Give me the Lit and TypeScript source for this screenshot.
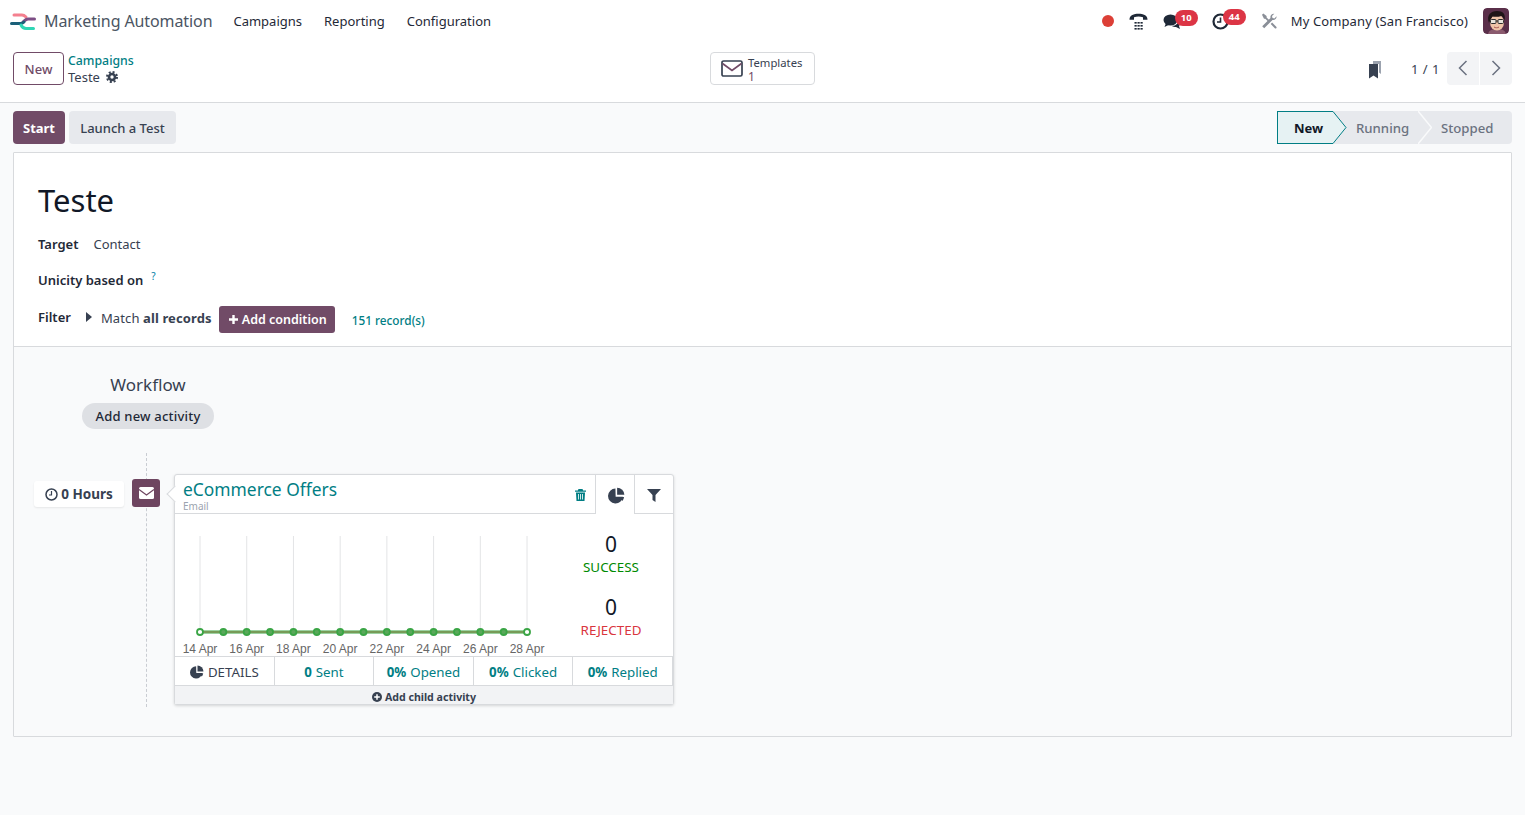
import { LitElement, html, css, svg } from "lit";
import { customElement } from "lit/decorators.js";

const TEAL = "#017e84";
const PLUM = "#714b67";
const DARK = "#374151";

const pie = (size: number, color: string) => html`
  <svg width=${size} height=${size} viewBox="0 0 16 16" fill=${color}>
    <path d="M7 1.500a7 7 0 1 0 7 7.600H7.200z" />
    <path d="M8.600 .6a7 7 0 0 1 6.800 6.800H8.600z" />
    <path d="M9.400 9.300h5.700a7 7 0 0 1-1.600 3.900z" />
  </svg>
`;

const envelopeOutline = html`
  <svg width="22" height="17" viewBox="0 0 22 17" fill="none" stroke=${PLUM} stroke-width="1.700">
    <rect x="1" y="1" width="20" height="15" rx="1.600" stroke=${DARK} />
    <path d="M1.500 3.500 11 10.500l9.500-7" />
  </svg>
`;

@customElement("app-root")
export class AppRoot extends LitElement {
  static styles = css`
    :host {
      display: block;
      font-family: "Noto Sans", "Open Sans", sans-serif;
      font-size: 13px;
      color: #374151;
      background: #f9fafb;
      min-height: 815px;
    }

    * {
      box-sizing: border-box;
    }

    .navbar {
      display: flex;
      align-items: center;
      height: 42px;
      padding: 0 16px 0 10px;
      background: #fff;
    }

    .app-name {
      margin-left: 8px;
      margin-right: 21px;
      font-size: 16px;
      letter-spacing: -0.1px;
      color: #4b5563;
    }

    .menu {
      display: flex;
      gap: 22px;
      color: #1f2937;
    }

    .systray {
      display: flex;
      align-items: center;
      margin-left: auto;
      color: #1f2937;
    }

    .tray-item {
      position: relative;
      display: flex;
      justify-content: center;
      align-items: center;
    }

    .badge {
      position: absolute;
      top: -4px;
      height: 16px;
      padding: 0 6px;
      border-radius: 8px;
      background: #dc3545;
      color: #fff;
      font-size: 9.500px;
      font-weight: 700;
      line-height: 16px;
    }

    .company {
      margin-left: 12px;
      margin-right: 15px;
      letter-spacing: 0.12px;
    }

    .avatar {
      display: block;
      border-radius: 4px;
    }

    .control {
      display: grid;
      grid-template-columns: 1fr auto 1fr;
      align-items: center;
      height: 61px;
      padding: 0 13px 8px;
      background: #fff;
      border-bottom: 1px solid #d8dadd;
    }

    .control-left {
      display: flex;
      align-items: center;
      gap: 4px;
    }

    .btn-new {
      height: 33px;
      width: 51px;
      padding: 1px 0 0;
      border: 1px solid #714b67;
      border-radius: 4px;
      background: #fff;
      color: #714b67;
      font: inherit;
      font-weight: 500;
    }

    .crumbs {
      display: flex;
      flex-direction: column;
      line-height: 16px;
      padding-top: 1px;
    }

    .crumbs a {
      color: #017e84;
      font-size: 12.300px;
      font-weight: 500;
    }

    .crumb-current {
      display: flex;
      align-items: center;
      gap: 6px;
    }

    .stat-btn {
      display: flex;
      align-items: center;
      gap: 5px;
      width: 105px;
      height: 33px;
      padding: 0 10px 0 10px;
      border: 1px solid #d8dadd;
      border-radius: 4px;
      background: #fff;
    }

    .stat-text {
      display: flex;
      flex-direction: column;
      padding-top: 4px;
      font-size: 11.300px;
      line-height: 14px;
    }

    .stat-count {
      color: #714b67;
      font-size: 12px;
    }

    .control-right {
      display: flex;
      align-items: center;
      justify-content: flex-end;
    }

    .bookmark {
      margin-top: 4px;
    }

    .pager-text {
      margin-left: 29px;
      margin-right: 6px;
      padding-top: 1px;
      letter-spacing: 0.5px;
    }

    .pager-btn {
      display: flex;
      align-items: center;
      justify-content: center;
      width: 32px;
      height: 33px;
      background: #f3f4f6;
      margin-left: 1px;
    }

    .pager-btn.first {
      border-radius: 4px 0 0 4px;
    }

    .pager-btn.last {
      border-radius: 0 4px 4px 0;
    }

    .actions {
      display: flex;
      justify-content: space-between;
      padding: 8px 13px;
    }

    .action-btns {
      display: flex;
      gap: 4px;
    }

    .btn {
      height: 33px;
      padding: 0;
      border: none;
      border-radius: 4px;
      font: inherit;
      font-weight: 500;
    }

    .btn-primary {
      width: 52px;
      background: #714b67;
      color: #fff;
      font-weight: 700;
    }

    .btn-secondary {
      width: 107px;
      background: #e7e9ed;
      color: #374151;
    }

    .statusbar {
      display: flex;
      height: 33px;
      background: #e7e9ed;
      border-radius: 0 4px 4px 0;
      font-size: 13.200px;
      font-weight: 500;
      color: #6b7280;
    }

    .step {
      position: relative;
      display: flex;
      align-items: center;
    }

    .step svg {
      position: absolute;
      top: 0;
      left: 100%;
      z-index: 1;
    }

    .step-new {
      width: 56px;
      padding-left: 16px;
      background: #e6f2f3;
      border: 1px solid #017e84;
      border-right: none;
      color: #111827;
      font-size: 13px;
      font-weight: 700;
    }

    .step-new svg {
      top: -1px;
    }

    .step-running {
      width: 85px;
      padding-left: 23px;
    }

    .step-stopped {
      width: 94px;
      padding-left: 23px;
    }

    .sheet {
      margin: 0 13px;
      border: 1px solid #d8dadd;
      border-radius: 1px;
    }

    .form {
      height: 194px;
      padding: 24px 24px 0;
      background: #fff;
      border-bottom: 1px solid #d8dadd;
    }

    h1 {
      margin: 0;
      font-size: 31px;
      font-weight: 400;
      line-height: 47px;
      color: #111827;
    }

    .field {
      display: flex;
      align-items: center;
    }

    .label {
      font-weight: 600;
      color: #1f2937;
    }

    .field-target {
      margin-top: 8px;
      height: 24px;
      gap: 15px;
    }

    .field-unicity {
      margin-top: 12px;
      height: 24px;
    }

    .help {
      margin-left: 8px;
      margin-bottom: 8px;
      font-size: 10px;
      color: #0180a5;
    }

    .field-filter {
      margin-top: 10px;
      height: 30px;
    }

    .caret {
      margin-left: 15px;
      margin-right: 9px;
    }

    .match {
      padding-top: 1px;
      letter-spacing: 0.12px;
    }

    .add-cond {
      position: relative;
      top: 2px;
      display: flex;
      align-items: center;
      gap: 3px;
      width: 116px;
      height: 27px;
      margin-left: 7px;
      padding: 1px 0 0 9px;
      border-radius: 3px;
      background: #714b67;
      color: #fff;
      font-size: 12.500px;
      font-weight: 600;
    }

    .records {
      position: relative;
      top: 3px;
      margin-left: 17px;
      color: #017e84;
      font-size: 11.800px;
      font-weight: 500;
    }

    .workflow {
      position: relative;
      height: 389px;
      padding-top: 24px;
    }

    .workflow::before {
      content: "";
      position: absolute;
      left: 132px;
      top: 106px;
      height: 254px;
      border-left: 1px dashed #c9ccd2;
    }

    .wf-head {
      display: flex;
      flex-direction: column;
      align-items: center;
      width: 132px;
      margin-left: 68px;
    }

    .wf-title {
      font-size: 17px;
      line-height: 28px;
      color: #374151;
    }

    .wf-add {
      width: 132px;
      height: 26px;
      margin-top: 4px;
      border: none;
      border-radius: 13px;
      background: #dee0e4;
      color: #1f2937;
      font: inherit;
      font-weight: 500;
      letter-spacing: 0.2px;
    }

    .activity-row {
      display: flex;
      align-items: flex-start;
      margin-top: 45px;
      margin-left: 20px;
    }

    .timing {
      display: flex;
      align-items: center;
      justify-content: center;
      gap: 3px;
      width: 90px;
      height: 26px;
      margin-top: 7px;
      background: #fff;
      border-radius: 3px;
      box-shadow: 0 1px 2px rgba(0, 0, 0, 0.08);
      font-size: 13.500px;
      font-weight: 700;
    }

    .type-icon {
      position: relative;
      display: flex;
      align-items: center;
      justify-content: center;
      width: 28px;
      height: 28px;
      margin-top: 5px;
      margin-left: 8px;
      border-radius: 3px;
      background: #6e4560;
    }

    .card {
      position: relative;
      width: 500px;
      margin-left: 14px;
      background: #fff;
      border: 1px solid #d8dadd;
      border-radius: 3px;
      box-shadow: 0 1px 3px rgba(0, 0, 0, 0.15);
    }

    .card::before {
      content: "";
      position: absolute;
      left: -6px;
      top: 13px;
      width: 11px;
      height: 11px;
      background: #fff;
      border-left: 1px solid #d8dadd;
      border-bottom: 1px solid #d8dadd;
      transform: rotate(45deg);
    }

    .card-head {
      display: flex;
      height: 39px;
    }

    .card-title-wrap {
      display: flex;
      flex: 1;
      align-items: center;
      justify-content: space-between;
      padding: 2px 9px 0 8px;
      border-bottom: 1px solid #d8dadd;
    }

    .card-title {
      color: #017e84;
      font-size: 17.400px;
      line-height: 20px;
    }

    .card-sub {
      margin-top: 2px;
      margin-bottom: -1px;
      color: #9ca3af;
      font-size: 10px;
      line-height: 11px;
    }

    .head-btn {
      display: flex;
      align-items: center;
      justify-content: center;
      width: 39px;
      padding-top: 2px;
      border-left: 1px solid #d8dadd;
    }

    .head-btn.filter {
      border-bottom: 1px solid #d8dadd;
    }

    .head-btn.chart-tab {
      padding-left: 2px;
    }

    .card-body {
      display: grid;
      grid-template-columns: 372px 1fr;
      height: 142px;
    }

    .chart {
      display: block;
    }

    .outcomes {
      display: flex;
      flex-direction: column;
      align-items: center;
      padding-top: 15px;
      padding-left: 2px;
    }

    .outcome-num {
      padding-top: 1px;
      font-size: 21px;
      line-height: 28px;
      color: #111827;
    }

    .outcome-label {
      font-size: 13.400px;
      line-height: 18px;
      margin-bottom: 16px;
    }

    .ok {
      color: #008a00;
    }

    .ko {
      color: #d9363e;
    }

    .counters {
      display: grid;
      grid-template-columns: repeat(5, 1fr);
      height: 30px;
      border-top: 1px solid #d8dadd;
      border-bottom: 1px solid #d8dadd;
      font-size: 13.300px;
    }

    .counter {
      display: flex;
      align-items: center;
      justify-content: center;
      gap: 4px;
      padding-top: 1px;
      border-right: 1px solid #d8dadd;
      color: #017e84;
    }

    .counter b {
      font-weight: 700;
    }

    .counter.details {
      color: #374151;
      gap: 4px;
    }

    .add-child {
      display: flex;
      align-items: center;
      justify-content: center;
      gap: 3px;
      height: 18px;
      padding-top: 3px;
      background: #f2f3f5;
      font-size: 10.600px;
      font-weight: 700;
    }
  `;

  private renderLogo() {
    return html`
      <svg width="26" height="17" viewBox="0 0 26 17" fill="none" stroke-width="3" stroke-linecap="round">
        <path d="M4 2h8c2 0 3 1 4 2" stroke="#f4808f" />
        <path d="M13 9c2-2 3-3 5-3h6.500" stroke="#7d4e85" />
        <path d="M1.500 10.500h9c1.500 0 2.500-.5 3.500-1.500" stroke="#1b6079" />
        <path d="M11 12c1 2 2 3.500 5 3.500h7.500" stroke="#2fd6b5" />
      </svg>
    `;
  }

  private renderAvatar() {
    return html`
      <svg class="avatar" width="26" height="26" viewBox="0 0 26 26">
        <rect width="26" height="26" rx="4" fill="#5a2f4a" />
        <path d="M5 26c1-4 4-5 9-5s8 1 9 5z" fill="#8a5a6e" />
        <ellipse cx="14" cy="14.500" rx="7" ry="8" fill="#efc4a8" />
        <path d="M6 15C3 7 8 3 14 3s9 3 7.500 9.500c-1-2.500-2-4-3-4.500-3 1-7 1-9 .5-1 1.500-2.500 3.500-3.500 6.500z" fill="#1f1517" />
        <g fill="#e8e4dc" stroke="#2b2b2b" stroke-width="1">
          <rect x="7.500" y="11.500" width="5.500" height="4" rx="1" />
          <rect x="15" y="11.500" width="5.500" height="4" rx="1" />
        </g>
        <path d="M13 13h2" stroke="#2b2b2b" />
        <path d="M11 19c1.500 1 3.500 1 5 0" stroke="#a8574f" fill="none" />
      </svg>
    `;
  }

  private renderTray() {
    return html`
      <div class="systray">
        <div class="tray-item" style="width:12px">
          <svg width="12" height="12"><circle cx="6" cy="6" r="6" fill="#dc3f36" /></svg>
        </div>
        <div class="tray-item" style="width:20px;margin-left:15px">
          <svg width="19" height="17" viewBox="0 0 19 17" fill="#1f2937">
            <path d="M.5 6.800C.5 2 5 .8 9.500 .8s9 1.200 9 6H14V4.200c-3-.8-6-.8-9 0v2.600z" />
            <g>
              ${[5.5, 8.5, 11.5].map((x) =>
                [9, 12, 15].map((y) => svg`<rect x=${x} y=${y} width="2.200" height="1.600" />`)
              )}
            </g>
          </svg>
        </div>
        <div class="tray-item" style="width:20px;margin-left:13px">
          <svg width="18" height="15" viewBox="0 0 18 15" fill="#1f2937">
            <ellipse cx="7.500" cy="6" rx="7" ry="5.500" />
            <path d="M3 9 1.500 13l5-2.500z" />
            <path d="M15 5c2 1 3 2.500 2.500 4.500-.4 1.300-1 2-1.500 2.500l1 3-4-2c-1.500 0-3-.2-4-1 4 0 7-3 6-7z" />
          </svg>
          <span class="badge" style="left:13px">10</span>
        </div>
        <div class="tray-item" style="width:20px;margin-left:29px">
          <svg width="17" height="17" viewBox="0 0 17 17" fill="none" stroke="#1f2937">
            <circle cx="8.500" cy="8.500" r="7" stroke-width="2.200" />
            <path d="M8.500 4.500v4.500H5" stroke-width="1.600" />
          </svg>
          <span class="badge" style="left:12px">44</span>
        </div>
        <div class="tray-item" style="width:20px;margin-left:28px">
          <svg width="16" height="16" viewBox="0 0 16 16" fill="#8a8f98">
            <path d="M1.200 13.200 9.500 4.900c-.5-2 1-4.300 3.800-4.100L11 3.100l.5 1.900 1.900.5 2.200-2.300c.2 2.800-2.100 4.300-4.100 3.800l-8.300 8.300z" />
            <path d="M1 1.800 2.300.6 5.600 3v1.400l3.300 3.300-1.300 1.300-3.300-3.300H3z" />
            <path d="M9.700 10.900 11.100 9.500l4.200 4.200c.5.500.5 1 0 1.500s-1 .5-1.500 0z" />
          </svg>
        </div>
        <span class="company">My Company (San Francisco)</span>
        ${this.renderAvatar()}
      </div>
    `;
  }

  private renderChart() {
    const xs = Array.from({ length: 15 }, (_, i) => 25 + i * 23.36);
    return html`
      <svg class="chart" width="372" height="142" viewBox="0 0 372 142">
        ${xs
          .filter((_, i) => i % 2 === 0)
          .map(
            (x) => svg`
              <line x1=${x} x2=${x} y1="22" y2="119" stroke="#e3e4e6" />
              <text x=${x} y="139" text-anchor="middle" font-family="Liberation Sans" font-size="12" fill="#666">
                ${14 + Math.round((x - 25) / 23.36)} Apr
              </text>
            `
          )}
        <line x1="25" x2="352" y1="118" y2="118" stroke="#3aa545" stroke-width="3" />
        <line x1="25" x2="352" y1="118" y2="118" stroke="#b3926a" stroke-width="1" />
        ${xs.map(
          (x, i) => svg`
            <circle cx=${x} cy="118" r="3" fill=${i === 0 || i === 14 ? "#fff" : "#5aa85a"} stroke="#3aa545" stroke-width="1.800" />
          `
        )}
      </svg>
    `;
  }

  private renderCard() {
    return html`
      <div class="card">
        <div class="card-head">
          <div class="card-title-wrap">
            <div>
              <div class="card-title">eCommerce Offers</div>
              <div class="card-sub">Email</div>
            </div>
            <svg width="11" height="12" viewBox="0 0 11 12" fill=${TEAL}>
              <path d="M3.500 0h4l.7 1.500H11v1.300H0V1.500h2.800z" />
              <path d="M1 3.500h9l-.5 8.500h-8z" />
              <path d="M3.500 5v5.500M5.500 5v5.500M7.500 5v5.500" stroke="#cfe8e8" />
            </svg>
          </div>
          <div class="head-btn chart-tab">${pie(17, DARK)}</div>
          <div class="head-btn filter">
            <svg width="14" height="13" viewBox="0 0 14 13" fill=${DARK}>
              <path d="M0 0h14L8.500 6v7l-3-2V6z" />
            </svg>
          </div>
        </div>
        <div class="card-body">
          ${this.renderChart()}
          <div class="outcomes">
            <div class="outcome-num">0</div>
            <div class="outcome-label ok">SUCCESS</div>
            <div class="outcome-num">0</div>
            <div class="outcome-label ko">REJECTED</div>
          </div>
        </div>
        <div class="counters">
          <div class="counter details">${pie(14, DARK)} DETAILS</div>
          <div class="counter"><b>0</b> Sent</div>
          <div class="counter"><b>0%</b> Opened</div>
          <div class="counter"><b>0%</b> Clicked</div>
          <div class="counter"><b>0%</b> Replied</div>
        </div>
        <div class="add-child">
          <svg width="10" height="10" viewBox="0 0 10 10">
            <circle cx="5" cy="5" r="5" fill=${DARK} />
            <path d="M5 2.200v5.600M2.200 5h5.600" stroke="#fff" stroke-width="1.500" />
          </svg>
          Add child activity
        </div>
      </div>
    `;
  }

  render() {
    return html`
      <nav class="navbar">
        ${this.renderLogo()}
        <span class="app-name">Marketing Automation</span>
        <div class="menu">
          <span>Campaigns</span>
          <span>Reporting</span>
          <span>Configuration</span>
        </div>
        ${this.renderTray()}
      </nav>

      <div class="control">
        <div class="control-left">
          <button class="btn-new">New</button>
          <div class="crumbs">
            <a>Campaigns</a>
            <div class="crumb-current">
              Teste
              <svg width="12" height="12" viewBox="0 0 12 12" fill="none" stroke=${DARK}>
                <circle cx="6" cy="6" r="3" stroke-width="2.600" />
                <circle cx="6" cy="6" r="5" stroke-width="2" stroke-dasharray="2 1.930" />
              </svg>
            </div>
          </div>
        </div>
        <div class="stat-btn">
          ${envelopeOutline}
          <div class="stat-text">
            <span>Templates</span>
            <span class="stat-count">1</span>
          </div>
        </div>
        <div class="control-right">
          <svg class="bookmark" width="14" height="18" viewBox="0 0 14 18">
            <path d="M5 0h8v13l-2-1.500V3H5z" fill="#9ca3af" />
            <path d="M1 3h9v14.500l-4.500-3-4.500 3z" fill=${DARK} />
          </svg>
          <span class="pager-text">1 / 1</span>
          <div class="pager-btn first">
            <svg width="10" height="16" viewBox="0 0 10 16" fill="none" stroke="#6b7280" stroke-width="1.500">
              <path d="M8.500 1 1.500 8l7 7" />
            </svg>
          </div>
          <div class="pager-btn last">
            <svg width="10" height="16" viewBox="0 0 10 16" fill="none" stroke="#6b7280" stroke-width="1.500">
              <path d="M1.500 1l7 7-7 7" />
            </svg>
          </div>
        </div>
      </div>

      <div class="actions">
        <div class="action-btns">
          <button class="btn btn-primary">Start</button>
          <button class="btn btn-secondary">Launch a Test</button>
        </div>
        <div class="statusbar">
          <div class="step step-new">
            New
            <svg width="14" height="33" viewBox="0 0 14 33">
              <path d="M0 .5 13 16.500 0 32.500" fill="#e6f2f3" stroke=${TEAL} />
            </svg>
          </div>
          <div class="step step-running">
            Running
            <svg width="14" height="33" viewBox="0 0 14 33">
              <path d="M0 0 13.500 16.500 0 33" fill="none" stroke="#f9fafb" stroke-width="1.500" />
            </svg>
          </div>
          <div class="step step-stopped">Stopped</div>
        </div>
      </div>

      <div class="sheet">
        <div class="form">
          <h1>Teste</h1>
          <div class="field field-target">
            <span class="label">Target</span>
            <span>Contact</span>
          </div>
          <div class="field field-unicity">
            <span class="label">Unicity based on</span>
            <span class="help">?</span>
          </div>
          <div class="field field-filter">
            <span class="label">Filter</span>
            <svg class="caret" width="6" height="10" viewBox="0 0 6 10" fill=${DARK}><path d="M0 0l6 5-6 5z" /></svg>
            <span class="match">Match <b>all records</b></span>
            <div class="add-cond">
              <svg width="11" height="11" viewBox="0 0 11 11"><path d="M5.500 1v9M1 5.500h9" stroke="#fff" stroke-width="2.400" /></svg>
              Add condition
            </div>
            <span class="records">151 record(s)</span>
          </div>
        </div>
        <div class="workflow">
          <div class="wf-head">
            <span class="wf-title">Workflow</span>
            <button class="wf-add">Add new activity</button>
          </div>
          <div class="activity-row">
            <div class="timing">
              <svg width="13" height="13" viewBox="0 0 13 13" fill="none" stroke=${DARK}>
                <circle cx="6.500" cy="6.500" r="5.500" stroke-width="1.500" />
                <path d="M6.500 3v4H4" stroke-width="1.200" />
              </svg>
              0 Hours
            </div>
            <div class="type-icon">
              <svg width="15" height="12" viewBox="0 0 15 12" fill="#fff">
                <rect width="15" height="12" rx="1.500" />
                <path d="M0 2.500 7.500 8 15 2.500" fill="none" stroke="#6e4560" stroke-width="1.200" />
              </svg>
            </div>
            ${this.renderCard()}
          </div>
        </div>
      </div>
    `;
  }
}
